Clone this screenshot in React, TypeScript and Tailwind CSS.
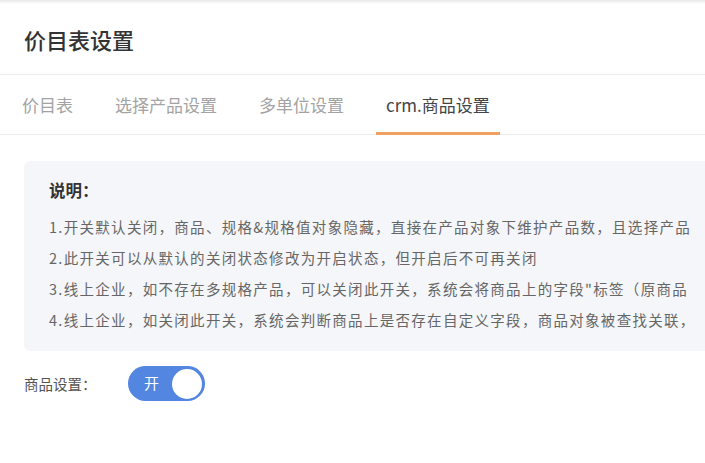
const tabs = ["价目表", "选择产品设置", "多单位设置", "crm.商品设置"];

const notes = [
  "1.开关默认关闭，商品、规格&规格值对象隐藏，直接在产品对象下维护产品数，且选择产品",
  "2.此开关可以从默认的关闭状态修改为开启状态，但开启后不可再关闭",
  "3.线上企业，如不存在多规格产品，可以关闭此开关，系统会将商品上的字段\"标签（原商品",
  "4.线上企业，如关闭此开关，系统会判断商品上是否存在自定义字段，商品对象被查找关联，",
];

export default function App() {
  const active = 3;

  return (
    <div
      className="w-[705px] h-[463px] overflow-hidden bg-white"
      style={{ fontFamily: '"Noto Sans CJK SC", "Noto Sans", sans-serif' }}
    >
      <div className="h-[4px] bg-gradient-to-b from-[#e9e9e9] to-white" />

      <header className="h-[71px] flex items-center pl-6 border-b border-[#ececec]">
        <h1 className="text-[22px] font-medium text-[#333]">价目表设置</h1>
      </header>

      <nav className="h-[60px] flex items-stretch gap-[22px] pl-3 border-b border-[#ececec]">
        {tabs.map((t, i) => (
          <div
            key={t}
            className={
              i === active
                ? "flex items-center px-[10px] pt-[3px] border-b-[3px] border-[#f0a061] text-[17px] text-[#444] -mb-px"
                : "flex items-center px-[10px] pt-[3px] border-b-[3px] border-transparent text-[17px] text-[#a3a3a3] -mb-px"
            }
          >
            {t}
          </div>
        ))}
      </nav>

      <section className="pl-6 pt-[26px]">
        <div className="w-[720px] bg-[#f5f6f9] rounded-l-md pl-[25px] pt-[17px] pb-[16px] whitespace-nowrap overflow-hidden">
          <div className="text-[16.5px] font-bold text-[#333] leading-6">说明：</div>
          <div className="mt-[9px]">
            {notes.map((n) => (
              <p key={n} className="text-[14.5px] leading-[31px] tracking-[1.3px] text-[#666]">
                {n}
              </p>
            ))}
          </div>
        </div>

        <div className="flex items-center mt-[15px]">
          <span className="w-[104px] text-[14.5px] text-[#555]">商品设置：</span>
          <button className="w-[77px] h-[35px] rounded-full bg-[#5286e0] flex items-center justify-between pl-[16px] pr-[3px]">
            <span className="text-white text-[15px]">开</span>
            <span className="w-[30px] h-[30px] rounded-full bg-white" />
          </button>
        </div>
      </section>
    </div>
  );
}
